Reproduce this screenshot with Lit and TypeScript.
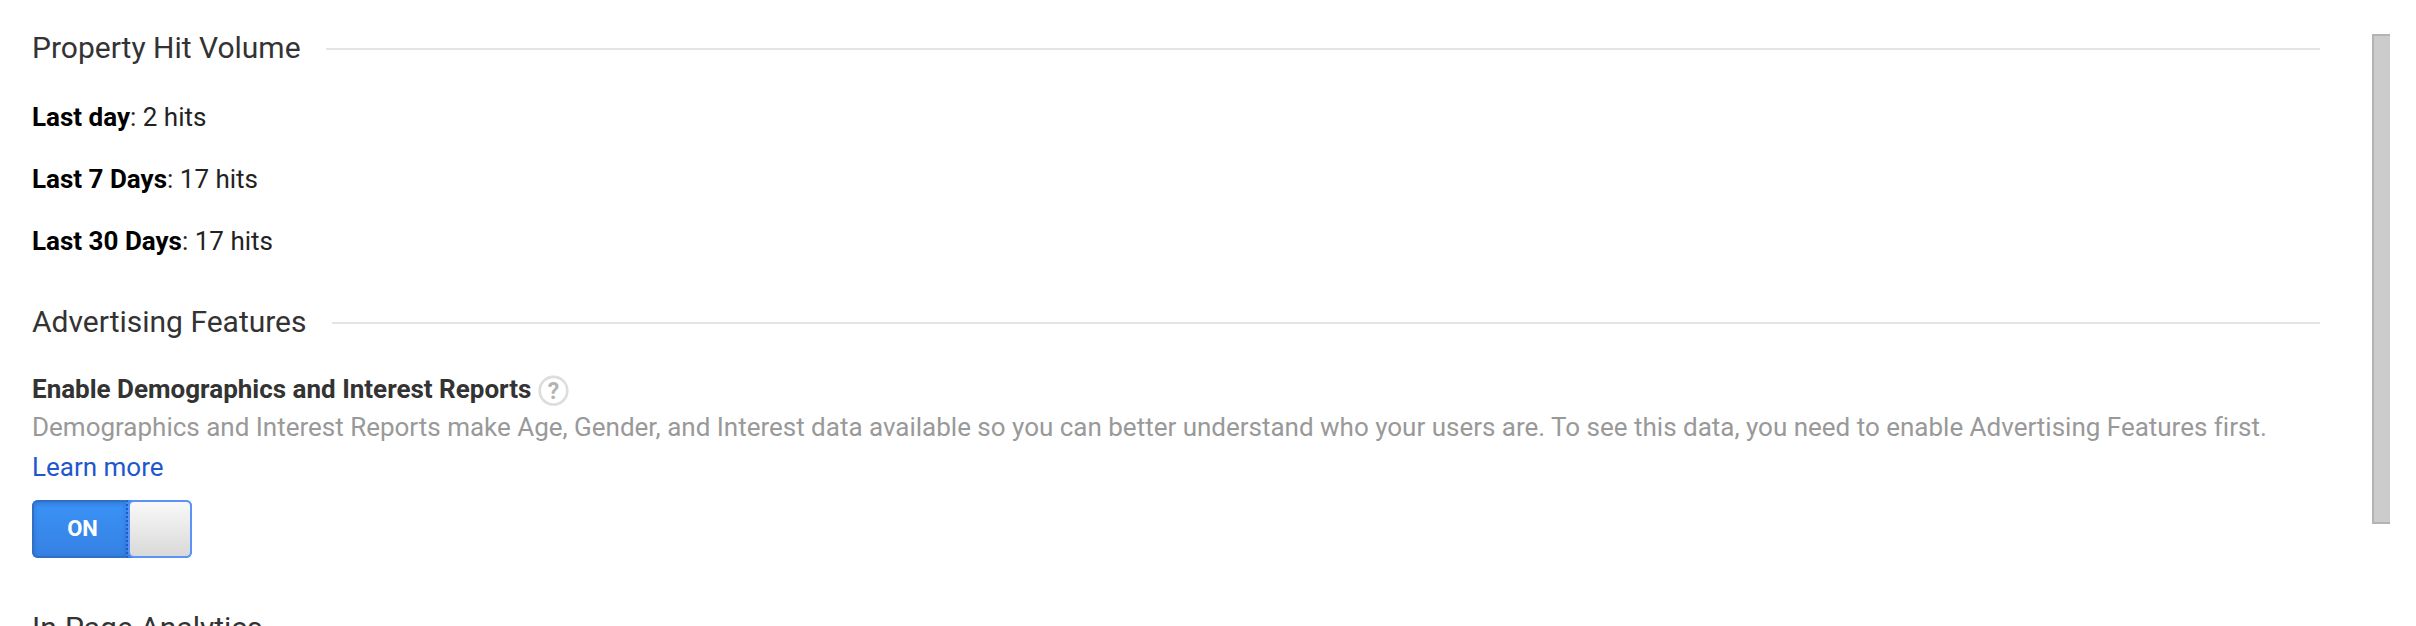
import { LitElement, html, css } from "lit";
import { customElement } from "lit/decorators.js";

@customElement("app-root")
export class AppRoot extends LitElement {
  static styles = css`
    :host { display: block; }
    .page { display: flex; height: 626px; overflow: hidden; background: #fff; font-family: Roboto, sans-serif; font-size: 26px; line-height: 40px; color: #222; }
    .main { flex: 1; padding: 26px 0 0 32px; }
    .head { display: flex; align-items: center; gap: 25px; margin-right: 52px; height: 44px; font-size: 30px; color: #333; }
    .head::after { content: ""; flex: 1; height: 2px; margin-top: 2px; background: #e4e4e4; }
    .stats { padding: 16px 0 28px; }
    .stat { height: 62px; line-height: 62px; }
    b { font-weight: 700; color: #000; }
    .desc { color: #999; letter-spacing: -0.007px; }
    .title { display: flex; align-items: flex-start; gap: 6px; font-weight: 700; margin-top: 25px; height: 38px; color: #333; }
    .help { width: 32px; height: 32px; margin-top: 6px; }
    .help text { font: 700 23px Roboto, sans-serif; fill: #b3b3b3; }
    .learn { color: #1f57cc; }
    .toggle { display: flex; width: 160px; height: 58px; margin: 13px 0 48px; border-radius: 6px; background: linear-gradient(#3b93f6, #3580e3); }
    .on { box-sizing: border-box; width: 96px; padding-left: 5px; border-radius: 6px 0 0 6px; border: 2px solid #2f70c4; border-right: 2px dotted #1f58c4; box-shadow: inset 0 2px 4px rgba(20, 70, 150, 0.3); color: #fff; font-weight: 700; font-size: 22px; line-height: 54px; text-align: center; }
    .knob { box-sizing: border-box; flex: 1; border: 2px solid #5b93f7; border-radius: 6px; background: linear-gradient(#f9f9f9, #d9d9d9); }
    .bar { box-sizing: border-box; width: 18px; height: 490px; margin: 34px 26px 0 0; background: #ccc; border: 2px solid #b4b4b4; border-right: 0; }
  `;
  render() {
    return html`<div class="page"><div class="main">
      <div class="head">Property Hit Volume</div>
      <div class="stats"><div class="stat"><b>Last day</b>: 2 hits</div><div class="stat"><b>Last 7 Days</b>: 17 hits</div><div class="stat"><b>Last 30 Days</b>: 17 hits</div></div>
      <div class="head">Advertising Features</div>
      <div class="title">Enable Demographics and Interest Reports
        <svg class="help" viewBox="0 0 32 32"><circle cx="16.5" cy="15.7" r="13.8" fill="#fff" stroke="#ddd" stroke-width="2.6"/><text x="16.5" y="23.5" text-anchor="middle">?</text></svg>
      </div>
      <div class="desc">Demographics and Interest Reports make Age, Gender, and Interest data available so you can better understand who your users are. To see this data, you need to enable Advertising Features first.</div>
      <div class="learn">Learn more</div>
      <div class="toggle"><div class="on">ON</div><div class="knob"></div></div>
      <div class="head">In-Page Analytics</div>
    </div><div class="bar"></div></div>`;
  }
}
